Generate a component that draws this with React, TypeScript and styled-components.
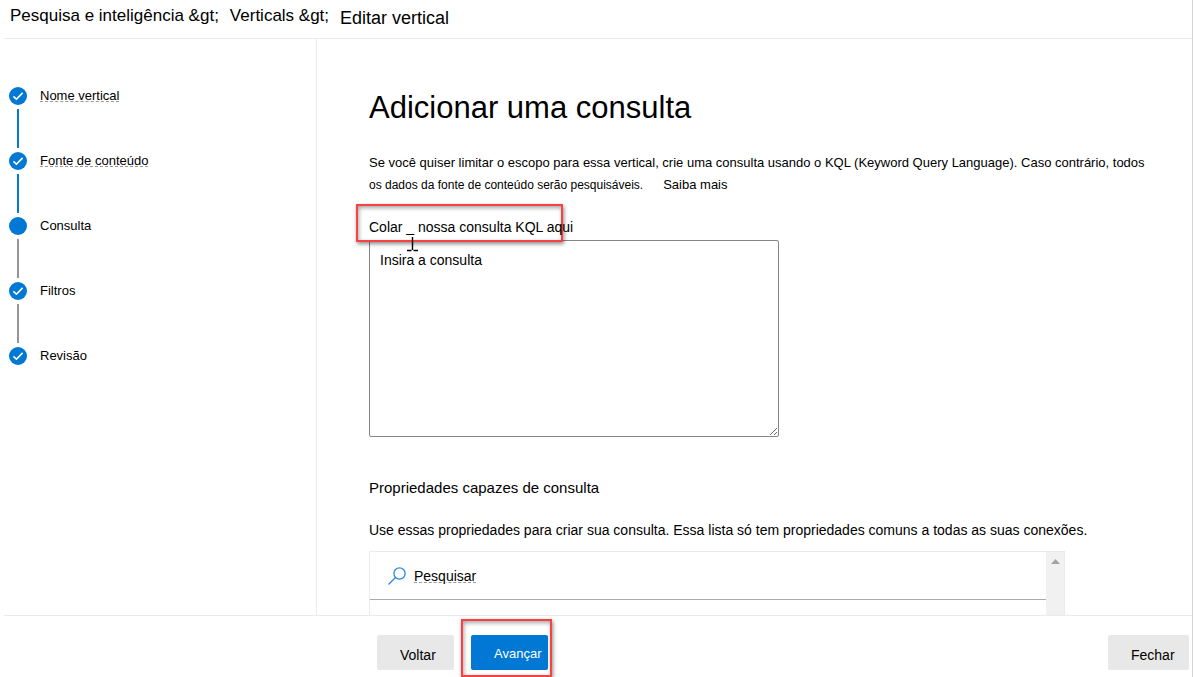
import React from "react";
import styled, { createGlobalStyle } from "styled-components";

const blue = "#0078d4";
const rule = "#ebebeb";

const GlobalStyle = createGlobalStyle`
  * { box-sizing: border-box; }
  body {
    margin: 0;
    background: #fff;
    color: #000;
    font: 14px/22px "Liberation Sans", Arial, sans-serif;
  }
  h1, h2, p, ol { margin: 0; padding: 0; font-weight: 400; }
  button, input, textarea { font: inherit; color: inherit; }
`;

const Page = styled.div`
  display: flex;
  flex-direction: column;
  height: 100vh;
  padding-left: 4px;
  border-right: 1px solid #d4d4d4;
`;

const Breadcrumb = styled.nav`
  display: flex;
  align-items: flex-start;
  gap: 11px;
  padding: 4px 6px 10px;
  border-bottom: 1px solid ${rule};
  font-size: 17px;
  line-height: 24px;
`;

const Crumb = styled.a`
  color: inherit;
  text-decoration: none;
`;

const CurrentCrumb = styled.span`
  padding-top: 2px;
  margin-bottom: -2px;
  font-size: 18px;
`;

const Body = styled.div`
  display: flex;
  flex: 1;
  min-height: 0;
`;

const Sidebar = styled.aside`
  flex: 0 0 313px;
  padding: 48px 5px;
  border-right: 1px solid ${rule};
`;

const Steps = styled.ol`
  list-style: none;
`;

const Step = styled.li`
  display: flex;
  align-items: flex-start;
  gap: 13px;
`;

const Track = styled.div`
  display: flex;
  flex-direction: column;
  align-items: center;
  gap: 4px;
  padding-bottom: 4px;
`;

const Dot = styled.span`
  display: flex;
  align-items: center;
  justify-content: center;
  width: 18px;
  height: 18px;
  border-radius: 50%;
  background: ${blue};
`;

const Connector = styled.span<{ $done: boolean }>`
  width: 2px;
  height: 39px;
  background: ${(p) => (p.$done ? blue : "#979593")};
`;

const StepLabel = styled.a<{ $linked?: boolean }>`
  color: inherit;
  font-size: 13px;
  line-height: 18px;
  text-decoration: ${(p) => (p.$linked ? "underline dashed 1px #999" : "none")};
  text-underline-offset: 1px;
  text-decoration-skip-ink: none;
`;

const Content = styled.main`
  flex: 1;
  min-width: 0;
  overflow: hidden;
  padding: 48px 36px 0 52px;
`;

const Title = styled.h1`
  font-size: 31px;
  line-height: 42px;
`;

const Intro = styled.p`
  max-width: 790px;
  margin-top: 23px;
  font-size: 13px;
`;

const Small = styled.span`
  font-size: 12px;
`;

const MoreLink = styled.a`
  margin-left: 20px;
  color: inherit;
  text-decoration: none;
`;

const Field = styled.div`
  display: flex;
  flex-direction: column;
  align-items: flex-start;
  margin-top: 20px;
`;

const LabelRow = styled.div`
  position: relative;
  padding-bottom: 2px;
`;

const QueryLabel = styled.label`
  position: relative;
  z-index: 1;
`;

const Highlight = styled.span`
  position: absolute;
  border: 2px solid #f94141;
  box-shadow: 1px 2px 4px rgba(0, 0, 0, 0.45), inset 1px 2px 4px rgba(0, 0, 0, 0.35);
  pointer-events: none;
`;

const LabelHighlight = styled(Highlight)`
  inset: -12px 10px -2px -13px;
`;

const NextHighlight = styled(Highlight)`
  inset: -16px -4px -7px -10px;
`;

const TextCursor = styled.svg`
  position: absolute;
  left: 38px;
  top: 17px;
  z-index: 1;
`;

const QueryBox = styled.textarea`
  width: 410px;
  max-width: 100%;
  height: 197px;
  padding: 8px 10px;
  border: 1px solid #858585;
  border-radius: 2px;
  background: #fff;
  &::placeholder { color: #000; opacity: 1; }
`;

const SectionTitle = styled.h2`
  margin-top: 40px;
  font-size: 15px;
  line-height: 22px;
`;

const SectionText = styled.p`
  margin-top: 20px;
`;

const PropertyList = styled.div`
  display: flex;
  width: 696px;
  max-width: 100%;
  height: 320px;
  margin-top: 10px;
  border: 1px solid ${rule};
`;

const PropertyRows = styled.div`
  flex: 1;
`;

const SearchRow = styled.label`
  display: flex;
  align-items: center;
  gap: 8px;
  height: 48px;
  padding: 0 18px;
  border-bottom: 1px solid #ababab;
`;

const SearchInput = styled.input`
  flex: 1;
  border: 0;
  padding: 0;
  outline: 0;
  background: none;
  &::placeholder {
    color: #000;
    opacity: 1;
    text-decoration: underline dashed 1px #999;
  }
`;

const ScrollTrack = styled.div`
  display: flex;
  justify-content: center;
  width: 18px;
  padding-top: 7px;
  background: #f1f1f1;
`;

const Footer = styled.footer`
  display: flex;
  align-items: flex-start;
  gap: 17px;
  padding: 19px 3px 7px 373px;
  border-top: 1px solid ${rule};
`;

const NextWrap = styled.div`
  position: relative;
  margin-right: auto;
`;

const Button = styled.button<{ $primary?: boolean; $wide?: boolean }>`
  display: block;
  width: ${(p) => (p.$wide ? 81 : 77)}px;
  height: 35px;
  padding: ${(p) => (p.$primary ? "2px 0 0 23px" : "4px 0 0 23px")};
  border: 0;
  border-radius: 2px;
  background: ${(p) => (p.$primary ? blue : "#e8e8e8")};
  color: ${(p) => (p.$primary ? "#fff" : "#000")};
  font-size: ${(p) => (p.$primary ? 13 : 14)}px;
  text-align: left;
`;

const steps = [
  { name: "Nome vertical", checked: true, done: true, linked: true },
  { name: "Fonte de conteúdo", checked: true, done: true, linked: true },
  { name: "Consulta", checked: false, done: false },
  { name: "Filtros", checked: true, done: false },
  { name: "Revisão", checked: true, done: false },
];

const Check = () => (
  <svg width="12" height="12" viewBox="0 0 12 12" fill="none" stroke="#fff" strokeWidth="1.6">
    <path d="M1.4 6.4 4.4 9.2 10.6 2.9" />
  </svg>
);

export default function App() {
  return (
    <>
      <GlobalStyle />
      <Page>
        <Breadcrumb>
          <Crumb href="#search">{"Pesquisa e inteligência &gt;"}</Crumb>
          <Crumb href="#verticals">{"Verticals &gt;"}</Crumb>
          <CurrentCrumb>Editar vertical</CurrentCrumb>
        </Breadcrumb>
        <Body>
          <Sidebar>
            <Steps>
              {steps.map((s, i) => (
                <Step key={s.name}>
                  <Track>
                    <Dot>{s.checked && <Check />}</Dot>
                    {i < steps.length - 1 && <Connector $done={s.done} />}
                  </Track>
                  <StepLabel href="#step" $linked={s.linked}>{s.name}</StepLabel>
                </Step>
              ))}
            </Steps>
          </Sidebar>
          <Content>
            <Title>Adicionar uma consulta</Title>
            <Intro>
              Se você quiser limitar o escopo para essa vertical, crie uma consulta usando o KQL
              (Keyword Query Language). Caso contrário, todos{" "}
              <Small>os dados da fonte de conteúdo serão pesquisáveis.</Small>
              <MoreLink href="#more">Saiba mais</MoreLink>
            </Intro>
            <Field>
              <LabelRow>
                <LabelHighlight />
                <QueryLabel htmlFor="query">Colar _ nossa consulta KQL aqui</QueryLabel>
                <TextCursor width="12" height="20" viewBox="0 0 12 20" stroke="#000" fill="none">
                  <path d="M5.5 4V17M0 17.5H4.5M6.5 17.5H11" strokeWidth="1.4" />
                </TextCursor>
              </LabelRow>
              <QueryBox id="query" placeholder="Insira a consulta" />
            </Field>
            <SectionTitle>Propriedades capazes de consulta</SectionTitle>
            <SectionText>
              Use essas propriedades para criar sua consulta. Essa lista só tem propriedades comuns a
              todas as suas conexões.
            </SectionText>
            <PropertyList>
              <PropertyRows>
                <SearchRow>
                  <svg width="18" height="18" viewBox="0 0 18 18" fill="none" stroke="#2b88d8" strokeWidth="1.3">
                    <circle cx="11.5" cy="6.5" r="5.6" />
                    <path d="M7.5 10.5.5 17.5" />
                  </svg>
                  <SearchInput type="text" placeholder="Pesquisar" />
                </SearchRow>
              </PropertyRows>
              <ScrollTrack>
                <svg width="9" height="5" viewBox="0 0 9 5" fill="#a3a3a3">
                  <path d="M0 5 4.5 0 9 5Z" />
                </svg>
              </ScrollTrack>
            </PropertyList>
          </Content>
        </Body>
        <Footer>
          <Button type="button">Voltar</Button>
          <NextWrap>
            <Button type="button" $primary>Avançar</Button>
            <NextHighlight />
          </NextWrap>
          <Button type="button" $wide>Fechar</Button>
        </Footer>
      </Page>
    </>
  );
}
